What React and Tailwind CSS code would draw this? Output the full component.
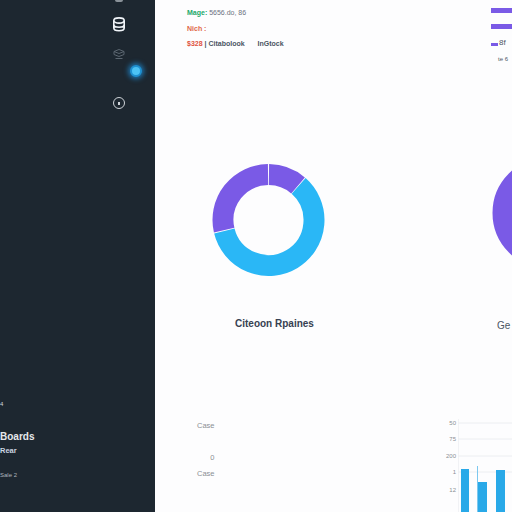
const sans = { fontFamily: '"Liberation Sans", Arial, sans-serif' };

// angles are clockwise from 12 o'clock
function arc(cx, cy, r, a0, a1) {
    const rad = (a) => ((a - 90) * Math.PI) / 180;
    const large = a1 - a0 > 180 ? 1 : 0;
    const x0 = cx + r * Math.cos(rad(a0));
    const y0 = cy + r * Math.sin(rad(a0));
    const x1 = cx + r * Math.cos(rad(a1));
    const y1 = cy + r * Math.sin(rad(a1));
    return `M${x0} ${y0}A${r} ${r} 0 ${large} 1 ${x1} ${y1}`;
}

function Donut({ segments }) {
    return (
        <svg width="113" height="116" viewBox="0 0 113 116" className="shrink-0 block">
            {segments.map((s, i) => (
                <path key={i} d={arc(56.5, 58, 45.5, s.from, s.to)} fill="none" stroke={s.color} strokeWidth="21" />
            ))}
        </svg>
    );
}

function Sidebar() {
    return (
        <aside className="w-[155px] shrink-0 h-full bg-[#1d2730] flex flex-col overflow-hidden text-white">
            <div className="flex justify-end pr-[32px]">
                <div className="w-[8px] h-[2px] rounded-b bg-[#8a9299]"></div>
            </div>
            <div className="flex justify-end pr-[29px] pt-[15px]">
                <svg width="14" height="15" viewBox="0 0 14 15" fill="none" stroke="#f1f5f9" strokeWidth="1.6">
                    <ellipse cx="7" cy="3.5" rx="5.2" ry="2.6" />
                    <path d="M1.8 3.5v7.5c0 1.5 2.3 2.7 5.2 2.7s5.2-1.2 5.2-2.7V3.5M1.8 7.5c0 1.5 2.3 2.7 5.2 2.7s5.2-1.2 5.2-2.7" />
                </svg>
            </div>
            <div className="flex justify-end pr-[30px] mt-[16px]">
                <svg width="12" height="12" viewBox="0 0 12 12" fill="none" stroke="#5b6670" strokeWidth="1">
                    <path d="M1 3.5 6 1.5l5 2v3l-5 2-5-2zM1 3.5l5 2 5-2M2.5 10.5h7" />
                </svg>
            </div>
            <div className="flex justify-end pr-[13px] mt-[5px]">
                <div className="w-[12px] h-[12px] rounded-full bg-[#4cc3f5] border-[2px] border-[#1e90d0] shadow-[0_0_5px_2px_rgba(30,144,220,0.7)]"></div>
            </div>
            <div className="flex justify-end pr-[30px] mt-[20px]">
                <div className="w-[12px] h-[12px] rounded-full border border-[#cfd4d9] flex items-center justify-center">
                    <div className="w-[2px] h-[3px] bg-[#cfd4d9]"></div>
                </div>
            </div>
            <div className="mt-[292px] h-[7px]">
                <span className="block text-[6px] leading-[7px] text-[#d1d5db] whitespace-nowrap" style={sans}>4</span>
            </div>
            <div className="mt-[22px]">
                <span className="block text-[10px] leading-[13px] font-semibold text-[#e5e7eb] whitespace-nowrap" style={sans}>Boards</span>
            </div>
            <div className="mt-[3px]">
                <span className="block text-[7.5px] leading-[10px] font-semibold text-[#cbd5e1] whitespace-nowrap" style={sans}>Rear</span>
            </div>
            <div className="mt-[15px]">
                <span className="block text-[6px] leading-[8px] text-[#aeb6bd] whitespace-nowrap" style={sans}>Sale 2</span>
            </div>
        </aside>
    );
}

function BarChart() {
    return (
        <div className="flex shrink-0">
            <div className="w-[35px] flex flex-col items-end pr-[2px] text-[6px] leading-[8px] text-[#8b8f94]" style={sans}>
                <span>50</span>
                <span className="mt-[8px]">75</span>
                <span className="mt-[9px]">200</span>
                <span className="mt-[8px]">1</span>
                <span className="mt-[10px]">12</span>
            </div>
            <svg width="54" height="93" viewBox="0 0 54 93" className="block">
                <path d="M0 0V93" stroke="#e5e7eb" />
                <path d="M0 4H54M0 20H54M0 37H54M0 53H54" stroke="#eceef1" />
                <path d="M3 50h8v43H3zM20 63h9v30h-9zM38 51h9v42h-9z" fill="#29a9e8" />
                <path d="M19.5 47v46" stroke="#7cc8ef" />
            </svg>
        </div>
    );
}

export default function App() {
    const left = [
        { from: 0.6, to: 40.5, color: '#7a5ae6' },
        { from: 41.5, to: 256, color: '#2ab7f6' },
        { from: 257, to: 359.4, color: '#7a5ae6' },
    ];
    const right = [{ from: 180, to: 359.9, color: '#7a5ae6' }];

    return (
        <div className="w-[512px] h-[512px] flex overflow-hidden bg-[#fdfdfe]" style={sans}>
            <Sidebar />
            <main className="w-[357px] h-full flex flex-col overflow-hidden">
                <div className="flex justify-between h-[162px] pl-[32px] pt-[8px]">
                    <div className="flex flex-col gap-[6.5px] text-[7px] leading-[9px] text-[#6b7280]">
                        <div className="whitespace-nowrap">
                            <span className="text-[#22a868] font-semibold">Mage:</span> 5656.do, 86
                        </div>
                        <div className="text-[#e0684a] font-semibold">Nich :</div>
                        <div className="flex gap-[13px] whitespace-nowrap font-semibold text-[#4b5563]">
                            <span><span className="text-[#e0523f]">$328</span> | Citabolook</span>
                            <span>InGtock</span>
                        </div>
                    </div>
                    <div className="w-[21px] shrink-0 flex flex-col overflow-hidden">
                        <div className="h-[5px] bg-[#7a5ae6]"></div>
                        <div className="h-[5px] bg-[#7a5ae6] mt-[11px]"></div>
                        <div className="flex items-end gap-[1px] mt-[11px] h-[6px]">
                            <div className="w-[7px] h-[3px] bg-[#7a5ae6] shrink-0"></div>
                            <span className="text-[8px] leading-[6px] text-[#4b5563] whitespace-nowrap">8f</span>
                        </div>
                        <span className="text-[6px] leading-[8px] text-[#4b5563] ml-[7px] mt-[9px] whitespace-nowrap">te 6</span>
                    </div>
                </div>
                <div className="flex h-[175px]">
                    <div className="w-[337px] shrink-0 flex flex-col">
                        <div className="pl-[57px]">
                            <Donut segments={left} />
                        </div>
                        <div className="pl-[80px] mt-[40px] text-[10px] leading-[12px] font-semibold text-[#374151] whitespace-nowrap">
                            Citeoon Rpaines
                        </div>
                    </div>
                    <div className="w-[20px] shrink-0 overflow-hidden flex flex-col">
                        <div className="-mt-[7px]">
                            <Donut segments={right} />
                        </div>
                        <div className="pl-[5px] mt-[49px] text-[10px] leading-[12px] text-[#4b5563] whitespace-nowrap">
                            Ge
                        </div>
                    </div>
                </div>
                <div className="flex justify-between mt-[83px] pl-[42px] overflow-hidden">
                    <div className="flex flex-col items-end text-[7.5px] leading-[9px] text-[#8b8f94] pt-[2px]">
                        <span>Case</span>
                        <span className="mt-[23px]">0</span>
                        <span className="mt-[7px]">Case</span>
                    </div>
                    <BarChart />
                </div>
            </main>
        </div>
    );
}
